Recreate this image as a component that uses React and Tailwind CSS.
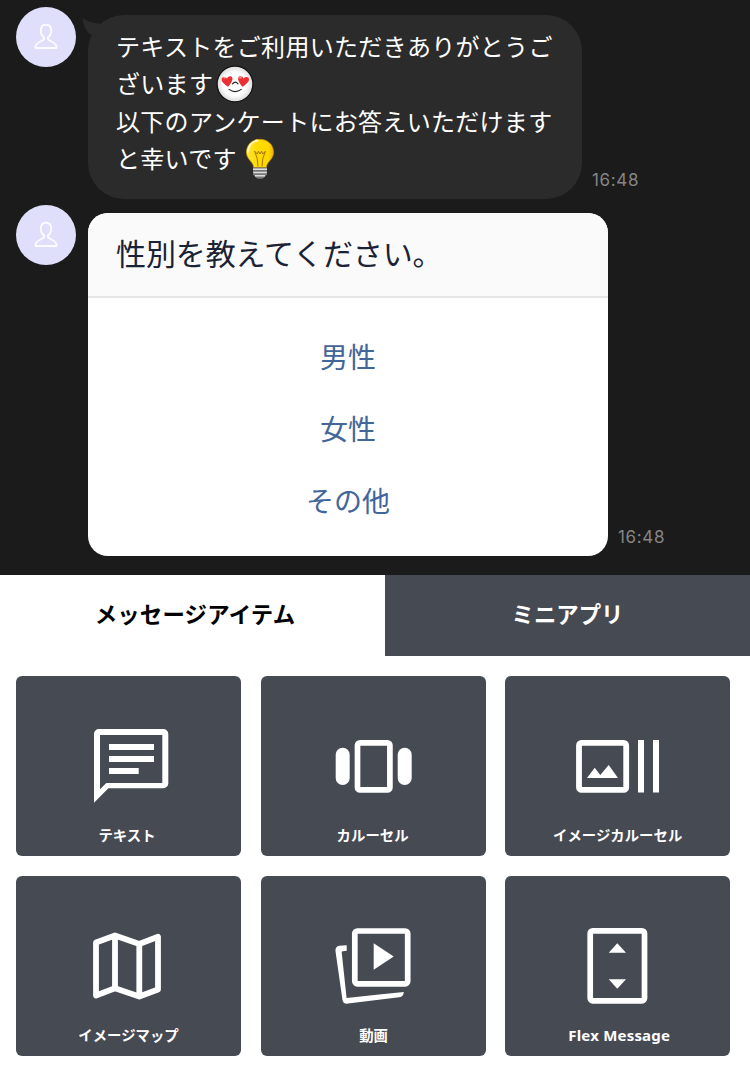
import React from "react";

const choices = ["男性", "女性", "その他"];

const items = [
  { label: "テキスト", Icon: TextIcon, text: "mt-4 text-[14.4px] pr-[3px]" },
  { label: "カルーセル", Icon: CarouselIcon, text: "mt-4 text-[14.4px] pr-px" },
  { label: "イメージカルーセル", Icon: ImageCarouselIcon, text: "mt-4 text-[14.4px]" },
  { label: "イメージマップ", Icon: MapIcon, text: "mt-4 text-[14.4px]" },
  { label: "動画", Icon: VideoIcon, text: "mt-4 text-[14.4px] pl-px" },
  { label: "Flex Message", Icon: FlexIcon, text: "mt-[15px] text-[15px] tracking-[0.2px] pl-[3px]" },
];

function IconBox({ children }) {
  return (
    <svg className="mt-11 h-[90px] w-[101px] shrink-0" viewBox="0 0 101 90" fill="white">
      {children}
    </svg>
  );
}

function TextIcon() {
  return (
    <IconBox>
      <path fillRule="evenodd" d="M16 82.7V14a5 5 0 0 1 5-5h64.3a5 5 0 0 1 5 5v49.3a5 5 0 0 1-5 5H30.4ZM22 69.3l6.3-6.3h56V15H22Z" />
      <path d="M31 24h45v6H31zM31 36h45v6H31zM31 48h29.7v6H31z" />
    </IconBox>
  );
}

function CarouselIcon() {
  return (
    <IconBox>
      <rect x="12.7" y="27.7" width="14" height="37.3" rx="7" />
      <rect x="34.5" y="22.8" width="32.4" height="47.1" rx="2.5" fill="none" stroke="white" strokeWidth="5.7" />
      <rect x="74.7" y="27.7" width="14" height="37.3" rx="7" />
    </IconBox>
  );
}

function ImageCarouselIcon() {
  return (
    <IconBox>
      <rect x="12" y="22.9" width="47.2" height="47" rx="2.5" fill="none" stroke="white" strokeWidth="5.8" />
      <path d="M20 58l7.7-10.3L33.3 55l8.4-10L51 58ZM71 20h6v52.5h-6zM86 20h6v52.5h-6z" />
    </IconBox>
  );
}

function MapIcon() {
  return (
    <IconBox>
      <path
        d="M18 22.5 37 15.5 61.3 24 80 16.8V69.5L61.3 76.5 37 68.3 18 75.5ZM37 15.5V68.3M61.3 24V76.5"
        fill="none"
        stroke="white"
        strokeWidth="5.8"
        strokeLinejoin="round"
      />
    </IconBox>
  );
}

function VideoIcon() {
  return (
    <IconBox>
      <rect x="31.8" y="11" width="52.9" height="52.8" rx="2.5" fill="none" stroke="white" strokeWidth="5.7" />
      <path d="M50.7 23.3 70.7 36.6 50.7 49.8Z" />
      <path d="M23.7 25.2v5.6l-4 .4q-1.2.1-1 1.4l4.9 45.3L56 74.4l24.8-2.5q-.3 4.6-4.6 5.4L25 83.6q-5 .6-5.6-4.2L12.5 31.3q-.5-4.8 4-5.5Z" />
    </IconBox>
  );
}

function FlexIcon() {
  return (
    <IconBox>
      <rect x="23.2" y="10.9" width="54.3" height="69.9" rx="2.5" fill="none" stroke="white" strokeWidth="5.7" />
      <path d="M41.7 32.7 50.3 23.3 59 32.7ZM41.7 59.3H59L50.3 68.7Z" />
    </IconBox>
  );
}

function Avatar() {
  return (
    <div className="h-[60px] w-[60px] shrink-0 rounded-full bg-[#dfdffb]">
      <svg className="h-full w-full" viewBox="0 0 60 60" fill="none" stroke="#fbfbff" strokeWidth="1.9" strokeLinejoin="round">
        <path d="M28 30.4C25.8 29 24.8 26.5 24.8 23.8C24.8 20 26.8 17.8 30 17.8S35.2 20 35.2 23.8C35.2 26.5 34.2 29 32 30.4V32.2C33.5 34.4 40.4 35.6 40.4 39.2V41H19.6V39.2C19.6 35.6 26.5 34.4 28 32.2Z" />
      </svg>
    </div>
  );
}

function HeartEyes() {
  return (
    <svg className="ml-[3px] h-[38px] w-[38px] shrink-0" viewBox="0 0 38 38">
      <defs>
        <radialGradient id="face">
          <stop offset="0.65" stopColor="#fff" />
          <stop offset="1" stopColor="#d9d9d9" />
        </radialGradient>
        <path id="heart" d="M0 5.2C-2 3.4-6-.2-5.4-3.2C-4.9-5.6-1.4-5.6 0-3C1.4-5.6 4.9-5.6 5.4-3.2C6-.2 2 3.4 0 5.2Z" />
      </defs>
      <circle cx="19" cy="19" r="17.9" fill="url(#face)" stroke="#111" strokeWidth="1.2" />
      <use href="#heart" fill="#eb2f32" transform="translate(11.4 16.6) rotate(-8)" />
      <use href="#heart" fill="#eb2f32" transform="translate(27.2 16.6) rotate(8)" />
      <path d="M7.6 13.4q1-1.3 2.3-.3M23.4 13.4q1-1.3 2.3-.3" fill="none" stroke="#ff9a94" strokeWidth="1.2" />
      <path d="M16.5 18.8q2.8-3.4 5.5 0M13 24.4q6.2 4.4 12.3 0" fill="none" stroke="#222" strokeWidth="1.1" strokeLinecap="round" />
    </svg>
  );
}

function Bulb() {
  return (
    <svg className="ml-2 h-[42px] w-[30px] shrink-0" viewBox="0 0 30 42">
      <defs>
        <linearGradient id="glass">
          <stop offset="0" stopColor="#ffe53b" />
          <stop offset="0.4" stopColor="#ffdc00" />
          <stop offset="0.8" stopColor="#ffd800" />
          <stop offset="1" stopColor="#efb300" />
        </linearGradient>
      </defs>
      <path d="M8.7 29.6C8.3 23.5 1.4 21.5 1.4 14.3C1.4 6.8 7.3 1.3 15 1.3S28.6 6.8 28.6 14.3C28.6 21.5 21.7 23.5 21.3 29.6Z" fill="url(#glass)" stroke="#c68d00" strokeWidth="0.7" />
      <path d="M2.8 14C3.2 7.8 7 3.4 12.5 2.6" fill="none" stroke="#fff8c0" strokeWidth="2" strokeLinecap="round" />
      <path d="M13 28.5 12.2 20.5 9.6 13.2 12.3 16 13.4 13.2 15 16 16.6 13.2 17.9 16 20.4 13.2 17.8 20.5 17 28.5" fill="none" stroke="#a87200" strokeWidth="1" />
      <path d="M8 29.5h14v7.2l-3.4 3.2q-3.6 1.8-7.2 0L8 36.7Z" fill="#777" />
      <path d="M8 31.2h14M8.4 34.5h13.4M10 37.8h10" stroke="#ddd" strokeWidth="1.5" />
    </svg>
  );
}

function Time({ className }) {
  return (
    <span className={`font-[Inter,sans-serif] text-[17px] leading-5 tracking-[0.65px] text-[#858585] ${className}`}>
      16:48
    </span>
  );
}

export default function App() {
  return (
    <div className="h-[1076px] w-[750px] overflow-hidden bg-white font-['Noto_Sans_CJK_JP',sans-serif]">
      <section className="flex h-[575px] flex-col bg-[#1b1b1b] pt-[7px] pl-4">
        <div className="flex h-[198px] items-start">
          <Avatar />
          <div className="relative mt-2 ml-3 h-[184px] w-[494px] shrink-0 rounded-[36px] bg-[#2b2b2b] pt-[13px] pl-7 text-[24px] tracking-[0.3px] whitespace-nowrap text-white">
            <svg className="absolute top-0 -left-[6px] h-6 w-6" viewBox="0 0 24 24" fill="#2b2b2b">
              <path d="M.6 2.7C3.5 5.5 9 8 17.5 8.3L20 14L12 21L9 19.7C4.8 17.3 1 11 .6 2.7Z" />
            </svg>
            <p className="h-[37.5px] leading-[35.5px]">テキストをご利用いただきありがとうご</p>
            <p className="flex h-[37.5px] items-center leading-[37.5px]"><span className="pb-[3px]">ざいます</span><HeartEyes /></p>
            <p className="h-[37.5px] leading-[35.5px]">以下のアンケートにお答えいただけます</p>
            <p className="flex h-[37.5px] items-center leading-[37.5px]"><span className="pb-[3px]">と幸いです</span><Bulb /></p>
          </div>
          <Time className="mt-[163px] ml-[10px]" />
        </div>

        <div className="flex items-start">
          <Avatar />
          <div className="mt-2 ml-3 h-[343px] w-[520px] shrink-0 overflow-hidden rounded-[20px] bg-white">
            <h1 className="h-[85px] border-b-2 border-[#e5e5e5] bg-[#fafafa] pl-7 text-[30px] leading-[78px] tracking-[-0.1px] text-[#1a2235]">
              性別を教えてください。
            </h1>
            <div className="flex flex-col pt-[22px] text-center text-[28px] text-[#42659a]">
              {choices.map((choice) => (
                <button key={choice} className="h-[72px] leading-[72px]">{choice}</button>
              ))}
            </div>
          </div>
          <Time className="mt-[322px] ml-[10px]" />
        </div>
      </section>

      <nav className="flex h-[81px] text-[22.4px] font-bold">
        <button className="w-[385px] pb-1 pl-[5px] tracking-[0.2px] text-black">メッセージアイテム</button>
        <button className="flex-1 bg-[#464a53] pb-1 text-white">ミニアプリ</button>
      </nav>

      <section className="grid grid-cols-[225px_225px_225px] gap-x-[19.6px] gap-y-5 pt-5 pl-4">
        {items.map(({ label, Icon, text }) => (
          <div key={label} className="flex h-[180px] flex-col items-center rounded-[6px] bg-[#464a53]">
            <Icon />
            <span className={`font-['Noto_Sans','Noto_Sans_CJK_JP',sans-serif] leading-5 font-bold whitespace-nowrap text-white ${text}`}>
              {label}
            </span>
          </div>
        ))}
      </section>
    </div>
  );
}
